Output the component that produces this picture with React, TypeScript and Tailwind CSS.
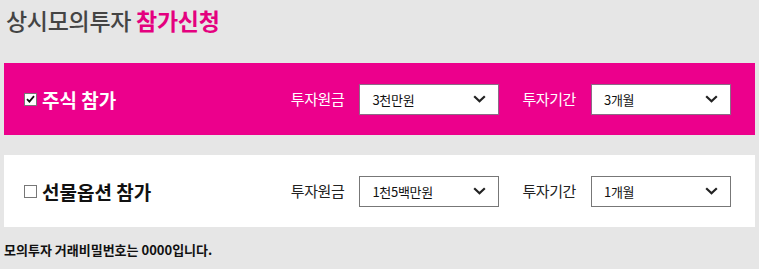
import type { ReactElement } from "react";

const FONT = "font-['Noto_Sans_CJK_KR','Malgun_Gothic','Noto_Sans',sans-serif]";

interface SelectBoxProps {
  readonly value: string;
  readonly border: string;
}

function SelectBox({ value, border }: SelectBoxProps): ReactElement {
  return (
    <div className={`flex h-[31px] w-[140px] items-center justify-between border bg-white pl-[12px] pr-[12px] ${border}`}>
      <span className="text-[13px] leading-none tracking-[-0.3px] text-[#111]">{value}</span>
      <svg width="13" height="8" viewBox="0 0 13 8" aria-hidden="true">
        <path d="M1.2 1.2 L6.5 6.3 L11.8 1.2" fill="none" stroke="#222" strokeWidth="2.2" />
      </svg>
    </div>
  );
}

interface PanelProps {
  readonly title: string;
  readonly checked: boolean;
  readonly amount: string;
  readonly period: string;
  readonly active: boolean;
}

function Panel({ title, checked, amount, period, active }: PanelProps): ReactElement {
  const labelColor = active ? "text-white" : "text-[#222]";
  const border = active ? "border-[#8c6a86]" : "border-[#777]";
  return (
    <div className={`flex h-[72px] items-center pl-5 pr-6 ${active ? "bg-[#ec008c]" : "bg-white"}`}>
      <div className="flex items-center gap-[5px]">
        <span className="flex size-[13px] items-center justify-center border border-[#777] bg-white">
          {checked && (
            <svg width="9" height="8" viewBox="0 0 9 8" aria-hidden="true">
              <path d="M1 4.2 L3.4 6.6 L8 1.2" fill="none" stroke="#111" strokeWidth="1.8" />
            </svg>
          )}
        </span>
        <span className={`text-[19px] font-bold leading-none ${active ? "text-white" : "text-[#111]"}`}>{title}</span>
      </div>
      <div className="ml-auto flex items-center">
        <span className={`mr-[15px] text-[15px] tracking-[-0.4px] ${labelColor}`}>투자원금</span>
        <SelectBox value={amount} border={border} />
        <span className={`ml-[23px] mr-[15px] text-[15px] tracking-[-0.4px] ${labelColor}`}>투자기간</span>
        <SelectBox value={period} border={border} />
      </div>
    </div>
  );
}

export default function App(): ReactElement {
  return (
    <div className={`min-h-[269px] bg-[#e6e6e6] px-1 ${FONT}`}>
      <h1 className="pl-[2px] pt-1 text-[23px] leading-[32px] font-medium tracking-[-0.3px] text-[#444]">
        상시모의투자 <span className="font-bold text-[#e4007f]">참가신청</span>
      </h1>
      <div className="mt-[27px] flex flex-col gap-5">
        <Panel title="주식 참가" checked amount="3천만원" period="3개월" active />
        <Panel title="선물옵션 참가" checked={false} amount="1천5백만원" period="1개월" active={false} />
      </div>
      <p className="mt-[14px] text-[13px] font-bold leading-[18px] text-[#111]">모의투자 거래비밀번호는 0000입니다.</p>
    </div>
  );
}
